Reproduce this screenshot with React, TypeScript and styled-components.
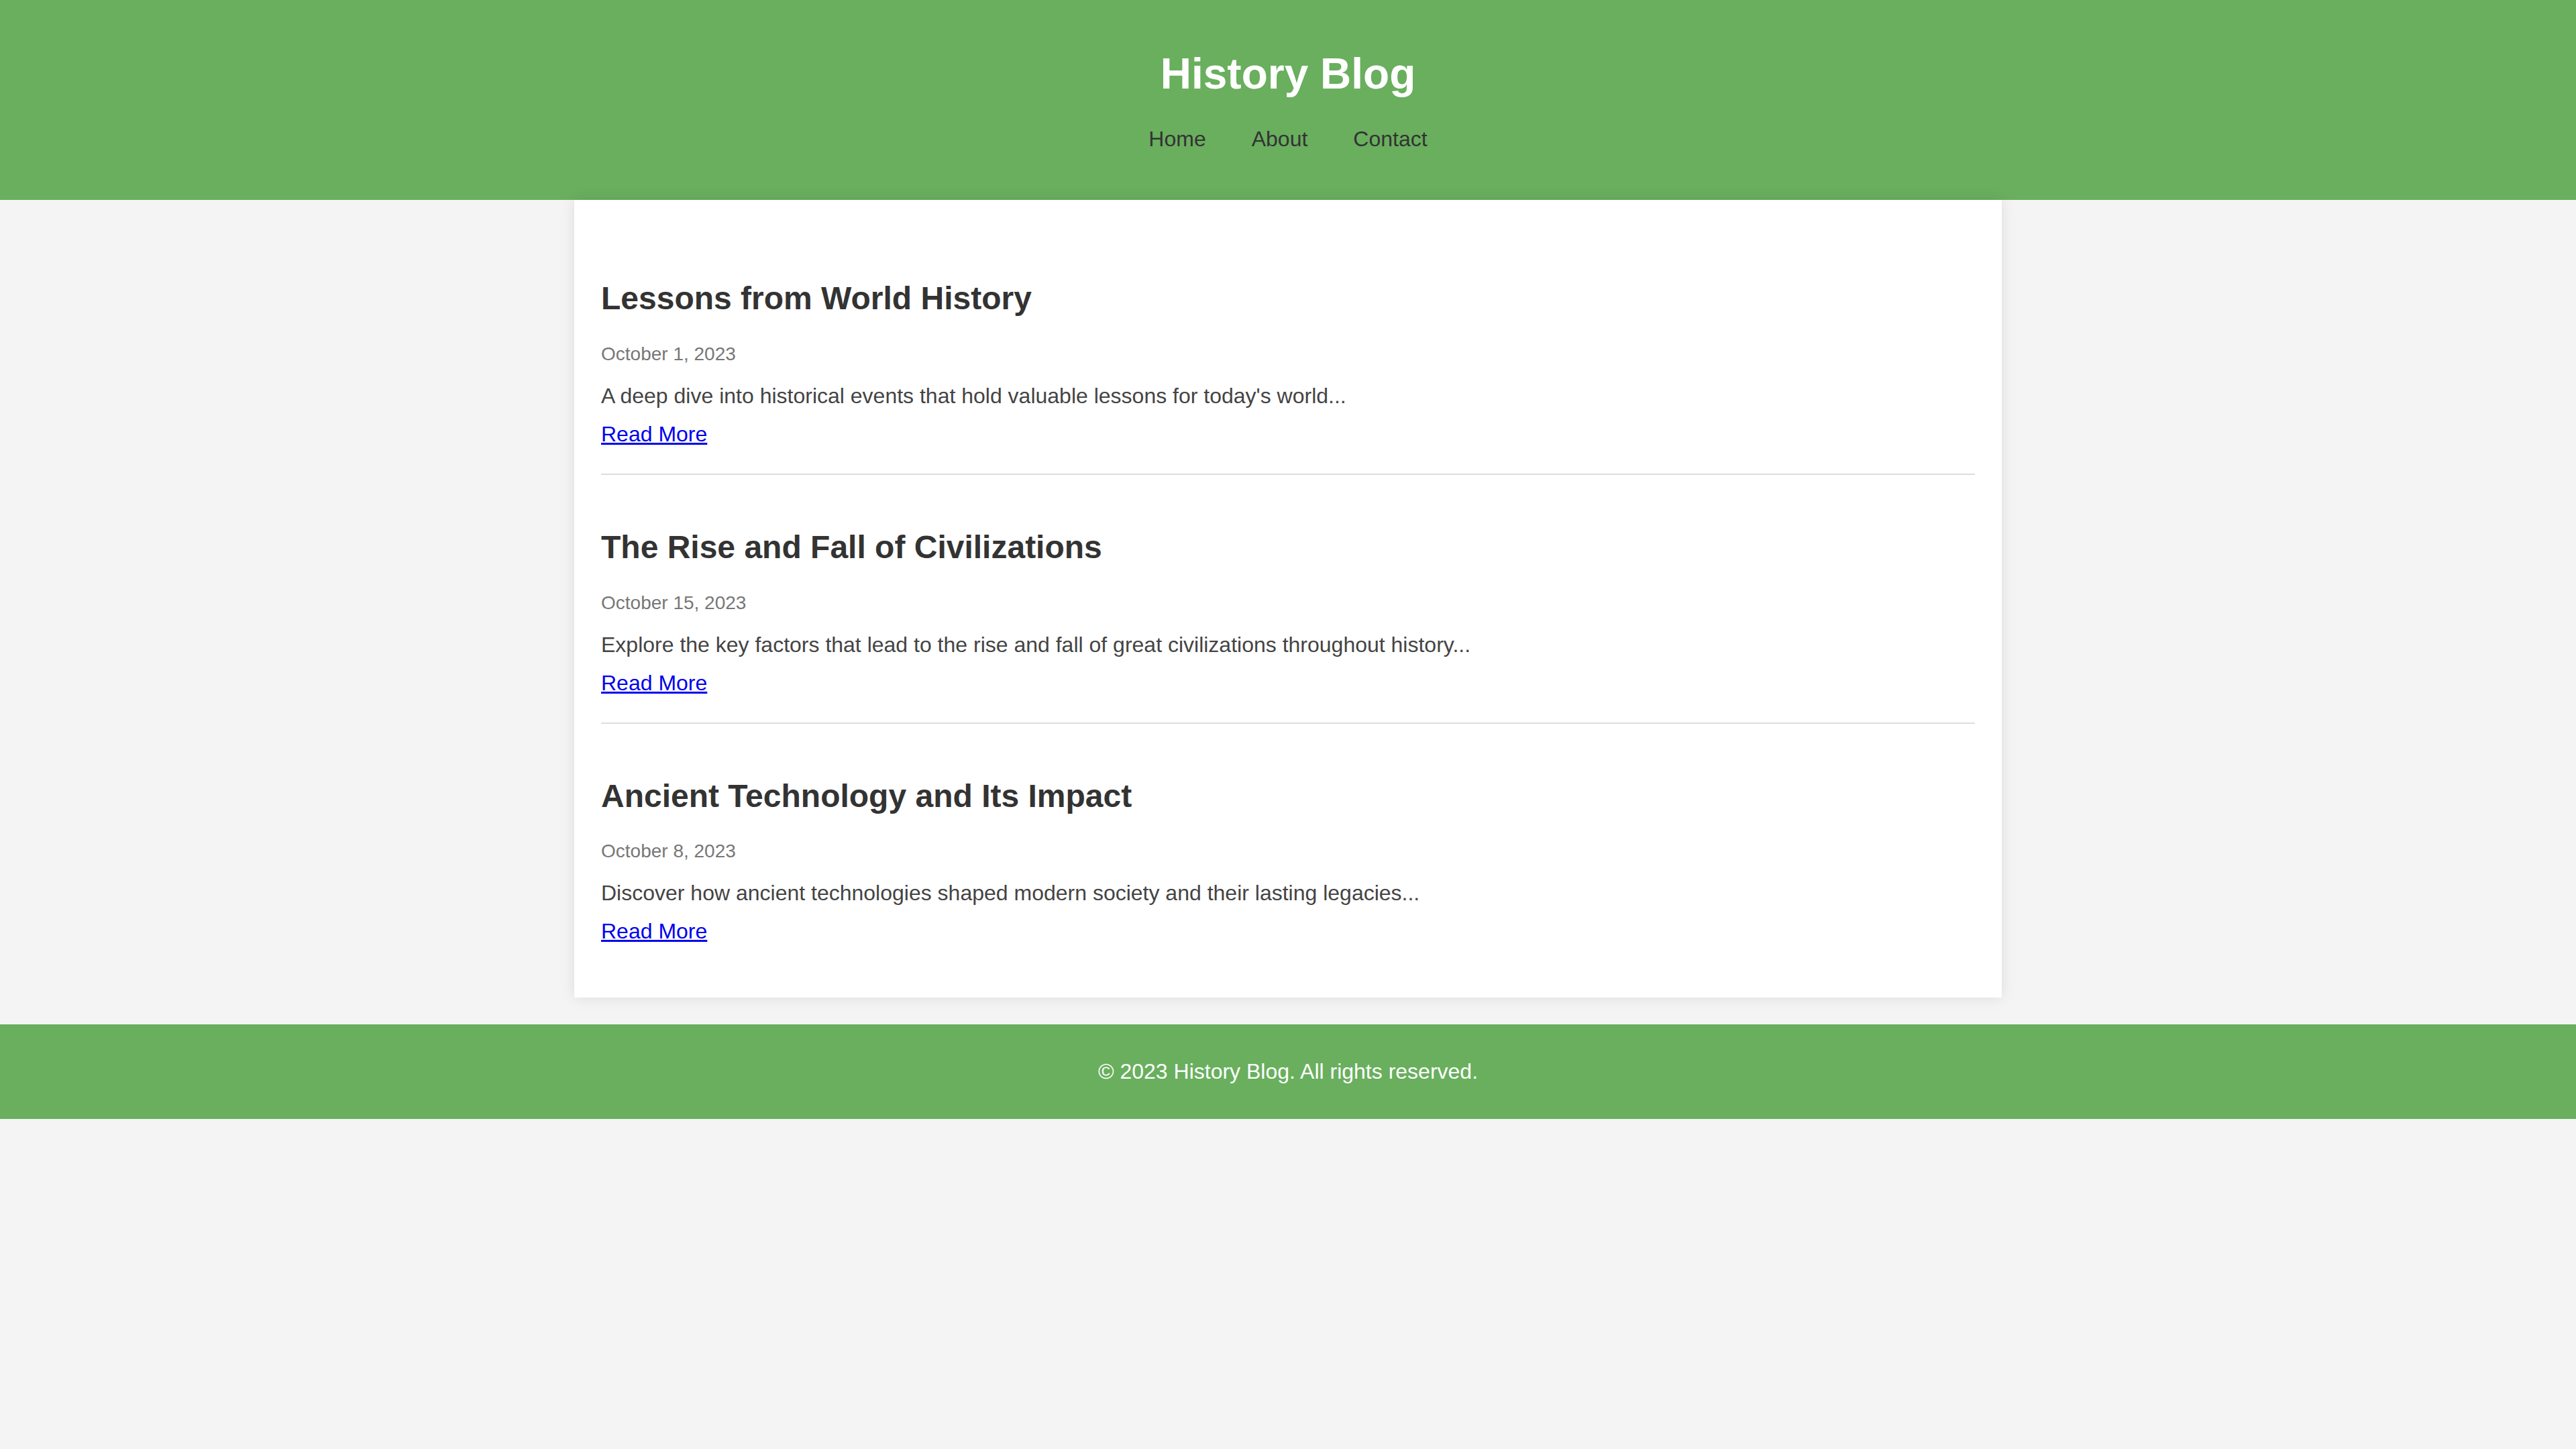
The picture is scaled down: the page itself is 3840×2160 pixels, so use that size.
import React from "react";
import styled, { createGlobalStyle } from "styled-components";

const GlobalStyle = createGlobalStyle`
  html, body {
    margin: 0;
    padding: 0;
    background: #f4f4f4;
    font-family: "Liberation Sans", Arial, Helvetica, sans-serif;
    color: #333;
  }
  * { box-sizing: content-box; }
`;

const green = "#69af5e";

const Header = styled.header`
  background: ${green};
  text-align: center;
  padding: 32px 0;
`;

const SiteTitle = styled.h1`
  margin: 41px 0 42px;
  font-size: 64px;
  font-weight: 700;
  color: #fff;
  line-height: normal;
`;

const Nav = styled.nav`
  margin: 0 0 39.5px;
`;

const NavList = styled.ul`
  list-style: none;
  margin: 0;
  padding: 0;
  display: flex;
  justify-content: center;
  gap: 68px;
`;

const NavLink = styled.a`
  font-size: 32px;
  color: #333;
  text-decoration: none;
  line-height: normal;
`;

const Card = styled.main`
  max-width: 2048px;
  margin: 0 auto 40px;
  padding: 40px;
  background: #fff;
  box-shadow: 0 0 20px rgba(0, 0, 0, 0.1);
`;

const Post = styled.article`
  padding: 40px 0;
  border-bottom: 2px solid #ddd;
  &:last-child {
    border-bottom: none;
  }
`;

const PostTitle = styled.h2`
  margin: 39.84px 0;
  font-size: 48px;
  font-weight: 700;
  color: #333;
  line-height: normal;
`;

const PostDate = styled.p`
  margin: 28px 0;
  font-size: 28px;
  color: #777;
  line-height: normal;
`;

const Excerpt = styled.p`
  margin: 20px 0;
  font-size: 32px;
  color: #444;
  line-height: normal;
`;

const ReadMore = styled.a`
  font-size: 32px;
  color: #0000ee;
  text-decoration: underline;
  text-decoration-thickness: 3px;
  text-underline-offset: 2px;
  line-height: normal;
`;

const Footer = styled.footer`
  background: ${green};
  color: #fff;
  text-align: center;
  padding: 20px 0;
`;

const FooterText = styled.p`
  margin: 32px 0;
  font-size: 32px;
  line-height: normal;
`;

const posts = [
  {
    title: "Lessons from World History",
    date: "October 1, 2023",
    excerpt:
      "A deep dive into historical events that hold valuable lessons for today's world...",
  },
  {
    title: "The Rise and Fall of Civilizations",
    date: "October 15, 2023",
    excerpt:
      "Explore the key factors that lead to the rise and fall of great civilizations throughout history...",
  },
  {
    title: "Ancient Technology and Its Impact",
    date: "October 8, 2023",
    excerpt:
      "Discover how ancient technologies shaped modern society and their lasting legacies...",
  },
];

export default function App() {
  return (
    <>
      <GlobalStyle />
      <Header>
        <SiteTitle>History Blog</SiteTitle>
        <Nav>
          <NavList>
            <li><NavLink href="#">Home</NavLink></li>
            <li><NavLink href="#">About</NavLink></li>
            <li><NavLink href="#">Contact</NavLink></li>
          </NavList>
        </Nav>
      </Header>
      <Card>
        {posts.map((p) => (
          <Post key={p.title}>
            <PostTitle>{p.title}</PostTitle>
            <PostDate>{p.date}</PostDate>
            <Excerpt>{p.excerpt}</Excerpt>
            <ReadMore href="#">Read More</ReadMore>
          </Post>
        ))}
      </Card>
      <Footer>
        <FooterText>© 2023 History Blog. All rights reserved.</FooterText>
      </Footer>
    </>
  );
}
